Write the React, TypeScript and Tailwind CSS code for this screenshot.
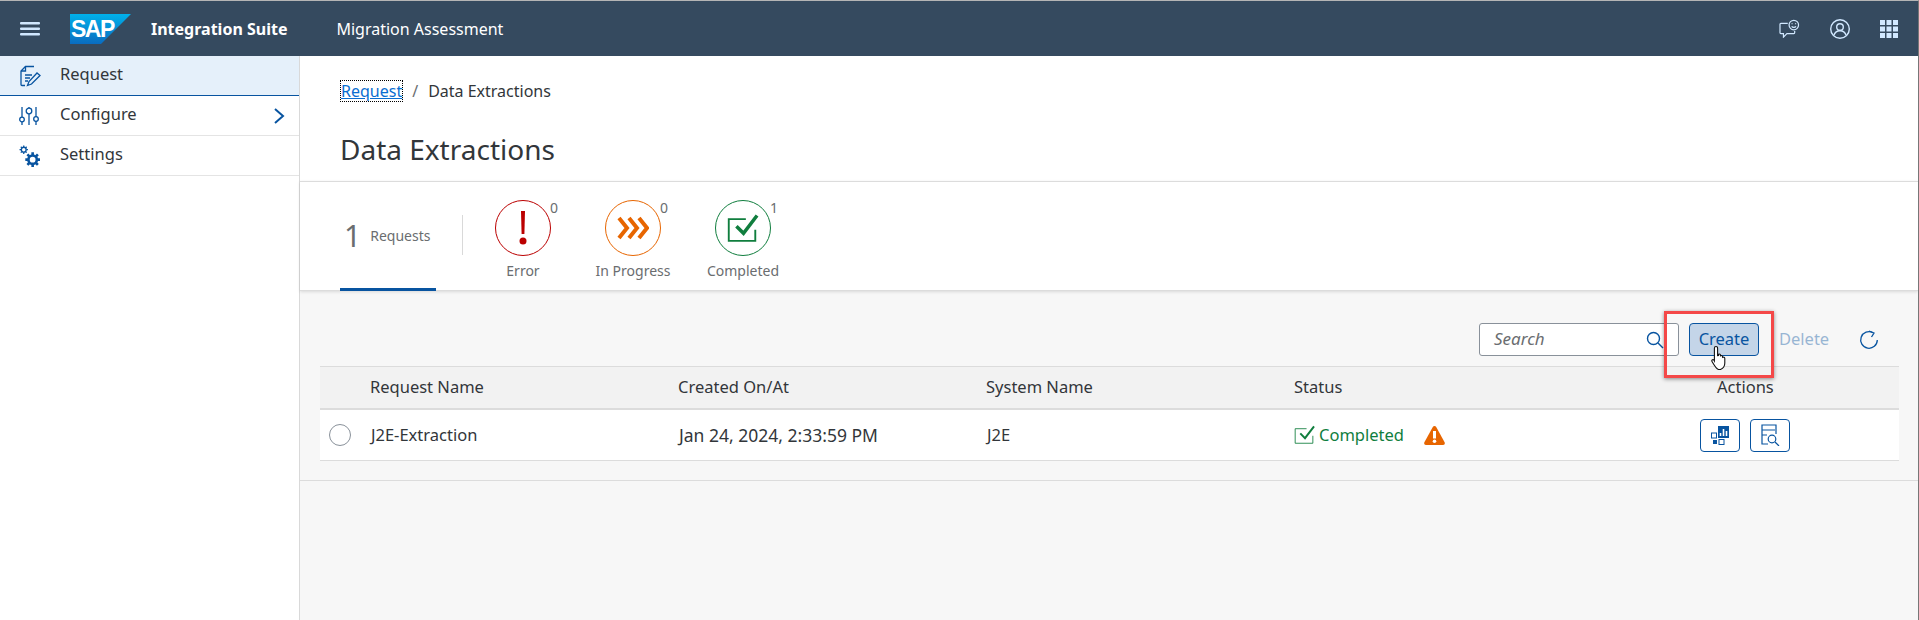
import React from "react";

const F = { fontFamily: '"Noto Sans", "Open Sans", Arial, sans-serif' };

function Logo() {
  return (
    <svg width="61" height="30" viewBox="0 0 61 30" className="shrink-0">
      <defs>
        <linearGradient id="sapg" x1="0" y1="0" x2="0" y2="1">
          <stop offset="0" stopColor="#00b1eb" />
          <stop offset="1" stopColor="#0a6cc0" />
        </linearGradient>
      </defs>
      <polygon points="0,0 61,0 31,30 0,30" fill="url(#sapg)" />
      <text x="1" y="23" fill="#fff" fontSize="23" fontWeight="800" fontFamily="Liberation Sans" letterSpacing="-1.5">SAP</text>
    </svg>
  );
}

const blue = "#0854a0";

function RequestIcon() {
  return (
    <svg width="22" height="22" viewBox="0 0 22 22" fill="none" stroke={blue} strokeWidth="1.3">
      <path d="M15 1.500H6.500L2 6v13.500a1 1 0 0 0 1 1h3" />
      <path d="M6.500 1.500V6H2" />
      <path d="M6 10h7M6 13h5M6 16h3" />
      <path d="M8.500 20.500l1.500-4L18 8l3 2.500-8.500 8.500z" />
    </svg>
  );
}
function ConfigureIcon() {
  return (
    <svg width="20" height="20" viewBox="0 0 20 20" fill="none" stroke={blue} strokeWidth="1.3">
      <path d="M3 1v10M3 16v3M10 1v1M10 8v11M17 1v10M17 15v4" />
      <circle cx="3" cy="13.500" r="2.300" />
      <circle cx="10" cy="5" r="2.800" />
      <circle cx="17" cy="13" r="2.300" />
    </svg>
  );
}
function SettingsIcon() {
  return (
    <svg width="21" height="22" viewBox="0 0 20 21" fill="none" stroke={blue}>
      <circle cx="4.500" cy="4.500" r="2.300" strokeWidth="1.300" />
      <path d="M4.500 .5v1.500M4.500 7v1.500M.5 4.500H2M7 4.500h1.500M1.700 1.700l1 1M7.300 1.700l-1 1M1.700 7.300l1-1M7.300 7.300l-1-1" strokeWidth="1.200" />
      <circle cx="13" cy="14" r="4" strokeWidth="2.500" />
      <path d="M13 7v2.500M13 18.500V21M6 14h2.500M17.500 14H20M8 9l1.800 1.800M18 9l-1.800 1.800M8 19l1.800-1.800M18 19l-1.800-1.800" strokeWidth="2.500" />
    </svg>
  );
}

function NavRow({ icon, label, active, chevron }: { icon: React.ReactNode; label: string; active?: boolean; chevron?: boolean }) {
  return (
    <div className={`flex h-10 items-center pl-[19px] pr-[13px] border-b ${active ? "bg-[#e5f0fa] border-[#0854a0]" : "bg-white border-[#e4e4e4]"}`}>
      <div className="flex w-[41px] shrink-0 items-center">{icon}</div>
      <span className="mb-[2px] text-[16.5px] text-[#32363a]">{label}</span>
      {chevron && (
        <svg className="ml-auto" width="14" height="18" viewBox="0 0 14 18" fill="none" stroke={blue} strokeWidth="2">
          <path d="M3 2l8 7-8 7" />
        </svg>
      )}
    </div>
  );
}

function StatusTab({ label, count, color, children }: { label: string; count: number; color: string; children: React.ReactNode }) {
  return (
    <div className="relative flex w-[110px] flex-col items-center">
      <div className="flex h-[56px] w-[56px] items-center justify-center rounded-full border bg-white" style={{ borderColor: color }}>
        {children}
      </div>
      <span className="absolute left-[82px] top-[-2px] text-sm leading-5 text-[#6a6d70]">{count}</span>
      <span className="mt-[5px] text-sm leading-5 text-[#6a6d70]">{label}</span>
    </div>
  );
}

function CheckBox({ size, stroke }: { size: number; stroke: number }) {
  return (
    <svg width={size} height={size} viewBox="0 0 28 28" fill="none" stroke="#107e3e">
      <path d="M24 15v9.500H1.500V6H16" strokeWidth={stroke} />
      <path d="M8 12l6 6L25.500 3" strokeWidth={stroke + 1.400} />
    </svg>
  );
}

function Cell({ w, children, className = "" }: { w: string; children: React.ReactNode; className?: string }) {
  return <div className={`${w} flex shrink-0 items-center ${className}`}>{children}</div>;
}

function ActionButton({ children }: { children: React.ReactNode }) {
  return (
    <button className="flex h-[33px] w-10 items-center justify-center rounded border border-[#0854a0] bg-white">
      {children}
    </button>
  );
}

export default function App() {
  return (
    <div style={F} className="flex h-[620px] w-[1919px] flex-col overflow-hidden border-t border-r border-t-[#b5b5b5] border-r-[#777777] bg-white text-[#32363a]">
      <header className="flex h-[55px] shrink-0 items-center bg-[#354a5f] pl-5 pr-[20px] text-white">
        <svg width="20" height="14" viewBox="0 0 20 14" fill="#d1e8ff" className="shrink-0">
          <rect width="20" height="2.500" y="0" rx="1" />
          <rect width="20" height="2.500" y="5.500" rx="1" />
          <rect width="20" height="2.500" y="11" rx="1" />
        </svg>
        <div className="ml-[30px]"><Logo /></div>
        <span className="ml-[20px] text-base font-bold">Integration Suite</span>
        <span className="ml-[49px] text-base">Migration Assessment</span>
        <div className="ml-auto flex items-center gap-[30px]">
          <svg width="21" height="19" viewBox="0 0 24 22" fill="none" stroke="#d1e8ff" strokeWidth="1.400">
            <path d="M10 5H2a1 1 0 0 0-1 1v10a1 1 0 0 0 1 1h3v4l4-4h8a1 1 0 0 0 1-1v-2" />
            <circle cx="17" cy="7" r="5.500" />
            <path d="M14.500 8.500c1 1.500 4 1.500 5 0M15 5v1M19 5v1" />
          </svg>
          <svg width="20" height="20" viewBox="0 0 20 20" fill="none" stroke="#d1e8ff" strokeWidth="1.400">
            <circle cx="10" cy="10" r="9.300" />
            <circle cx="10" cy="8" r="3.300" />
            <path d="M4 16c1-3 3-4.300 6-4.300s5 1.300 6 4.300" />
          </svg>
          <svg width="18" height="18" viewBox="0 0 18 18" fill="#d1e8ff">
            {[0, 6.500, 13].flatMap((y) => [0, 6.500, 13].map((x) => <rect key={`${x}-${y}`} x={x} y={y} width="5" height="5" />))}
          </svg>
        </div>
      </header>

      <div className="flex min-h-0 flex-1">
        <aside className="w-[300px] shrink-0 border-r border-[#d9d9d9] bg-white">
          <NavRow icon={<RequestIcon />} label="Request" active />
          <NavRow icon={<ConfigureIcon />} label="Configure" chevron />
          <NavRow icon={<SettingsIcon />} label="Settings" />
        </aside>

        <main className="flex min-w-0 flex-1 flex-col">
          <div className="h-[125px] shrink-0 pl-[41px] pt-[25px]">
            <div className="flex items-center text-base leading-5">
              <a className="text-[#0a6ed1] underline outline-1 outline-dotted outline-black">Request</a>
              <span className="mx-[10px] text-[#6a6d70]">/</span>
              <span>Data Extractions</span>
            </div>
            <h1 className="mt-[30px] ml-[-1px] text-[28px] leading-9 font-normal">Data Extractions</h1>
          </div>

          <div className="relative z-10 flex h-[110px] shrink-0 border-y border-[#dcdcdc] bg-white shadow-[0_1px_3px_rgba(0,0,0,0.12)] pl-[40px]">
            <div className="mb-[-1px] flex w-[96px] flex-col border-b-[3px] border-[#0854a0]">
              <div className="mt-[34px] flex h-[40px] items-center pl-[4px]">
                <span className="text-[30px] leading-none text-[#6a6d70]">1</span>
                <span className="ml-[9px] text-sm text-[#6a6d70]">Requests</span>
              </div>
            </div>
            <div className="mt-[33px] ml-[26px] h-[40px] w-px bg-[#d9d9d9]" />
            <div className="mt-[18px] ml-[5px] flex">
              <StatusTab label="Error" count={0} color="#bb0000">
                <svg width="10" height="36" viewBox="0 0 10 36" fill="#bb0000">
                  <path d="M3 1h4l-.6 23H3.600z" />
                  <circle cx="5" cy="31" r="3.500" />
                </svg>
              </StatusTab>
              <StatusTab label="In Progress" count={0} color="#e76500">
                <svg width="32" height="26" viewBox="0 0 32 26" fill="none" stroke="#e76500" strokeWidth="4" strokeLinejoin="miter">
                  <path d="M2 3l8 10-8 10M12 3l8 10-8 10M22 3l8 10-8 10" />
                </svg>
              </StatusTab>
              <StatusTab label="Completed" count={1} color="#107e3e">
                <CheckBox size={33} stroke={1.600} />
              </StatusTab>
            </div>
          </div>

          <div className="relative flex-1 bg-[#f7f7f7]">
            <div className="h-[190px] border-b border-[#dcdcdc] pt-[32px] pl-[20px] pr-[19px]">
              <div className="flex h-[33px] items-center justify-end">
                <div className="flex h-[33px] w-[200px] items-center justify-between rounded-[3px] border border-[#89919a] bg-white pl-[14px] pr-[14px]">
                  <span className="mb-[2px] text-[17px] text-[#6a6d70] italic">Search</span>
                  <svg width="18" height="18" viewBox="0 0 18 18" fill="none" stroke={blue} strokeWidth="1.400">
                    <circle cx="7.500" cy="7.500" r="6" />
                    <path d="M12 12l5 5" />
                  </svg>
                </div>
                <button className="ml-[10px] h-[33px] w-[70px] rounded border border-[#0854a0] bg-[#c4d5e8] text-[16.5px] text-[#0854a0]">Create</button>
                <span className="ml-[20px] w-[50px] text-[16.5px] whitespace-nowrap text-[#0854a0] opacity-40">Delete</span>
                <svg className="mr-[20px] ml-[30px]" width="20" height="20" viewBox="0 0 20 20" fill="none" stroke={blue} strokeWidth="1.300">
                  <path d="M14 2.700A8.300 8.300 0 1 0 18.300 10" />
                  <path d="M10 1l5 2-2.500 4" />
                </svg>
              </div>

              <div className="mt-[10px] flex h-[44px] items-center border-y border-[#dcdcdc] border-b-2 bg-[#f2f2f2] pl-[50px] text-[16.5px]">
                <Cell w="w-[308px]">Request Name</Cell>
                <Cell w="w-[308px]">Created On/At</Cell>
                <Cell w="w-[308px]">System Name</Cell>
                <Cell w="w-[423px]">Status</Cell>
                <Cell w="w-[100px]">Actions</Cell>
              </div>
              <div className="flex h-[51px] items-center border-b border-[#dcdcdc] bg-white pl-[9px] text-[16.5px]">
                <div className="mr-[20px] h-[22px] w-[22px] shrink-0 rounded-full border border-[#89919a] bg-white" />
                <Cell w="w-[308px]">J2E-Extraction</Cell>
                <Cell w="w-[308px]" className="text-[17.5px]">Jan 24, 2024, 2:33:59 PM</Cell>
                <Cell w="w-[307px]">J2E</Cell>
                <Cell w="w-[406px]" className="text-[#107e3e]">
                  <CheckBox size={22} stroke={1.100} />
                  <span className="ml-[3px]">Completed</span>
                  <svg className="ml-[20px]" width="21" height="19" viewBox="0 0 21 19">
                    <path d="M10.500 0c.8 0 1.300.4 1.700 1.100l8.400 15.200c.6 1.200 0 2.700-1.500 2.700H1.900C.4 19-.2 17.500.4 16.300L8.800 1.100C9.200.4 9.700 0 10.500 0z" fill="#e76500" />
                    <rect x="9" y="5" width="3" height="7.500" fill="#fff" />
                    <circle cx="10.500" cy="15.300" r="1.800" fill="#fff" />
                  </svg>
                </Cell>
                <div className="flex gap-[10px]">
                  <ActionButton>
                    <svg width="20" height="20" viewBox="0 0 20 20" fill="none">
                      <rect x="8" y="1" width="11" height="12" fill={blue} />
                      <path d="M10.500 11V8M13.500 11V4M16.500 11V6" stroke="#fff" strokeWidth="1.600" />
                      <rect x="1.500" y="8" width="5" height="5" stroke={blue} />
                      <rect x="3" y="15" width="4" height="4" fill={blue} />
                      <rect x="9" y="14.500" width="5" height="5" stroke={blue} />
                    </svg>
                  </ActionButton>
                  <ActionButton>
                    <svg width="20" height="22" viewBox="0 0 20 22" fill="none" stroke={blue} strokeWidth="1.200">
                      <path d="M8 20H2V1h14v9" />
                      <path d="M2 6h13M2 11h5" />
                      <circle cx="12" cy="15" r="3.800" />
                      <path d="M15 18l4 4" />
                    </svg>
                  </ActionButton>
                </div>
              </div>
            </div>

            <div className="pointer-events-none absolute left-[1364px] top-[20px] h-[67px] w-[110px] border-[3px] border-[#f44848] shadow-[0_1px_4px_rgba(0,0,0,0.45)]" />
            <svg className="absolute left-[1411px] top-[54px]" width="18" height="25" viewBox="0 0 18 25">
              <path
                d="M5 1.500c1 0 1.600.7 1.600 1.700v7.500l1-.2V9.300c.9-.6 2 0 2 1v.5c.9-.6 2 0 2 1v.6c1-.6 2.200 0 2.200 1.100v4.500c0 2.500-1.800 5.500-4.300 6.500H7.500C5.500 24 3 20 1 16.500c-.6-1 .6-2.500 1.800-1.600l.6 1V3.200C3.400 2.200 4 1.500 5 1.500z"
                fill="#fff"
                stroke="#111"
                strokeWidth="1.100"
              />
            </svg>
          </div>
        </main>
      </div>
    </div>
  );
}
